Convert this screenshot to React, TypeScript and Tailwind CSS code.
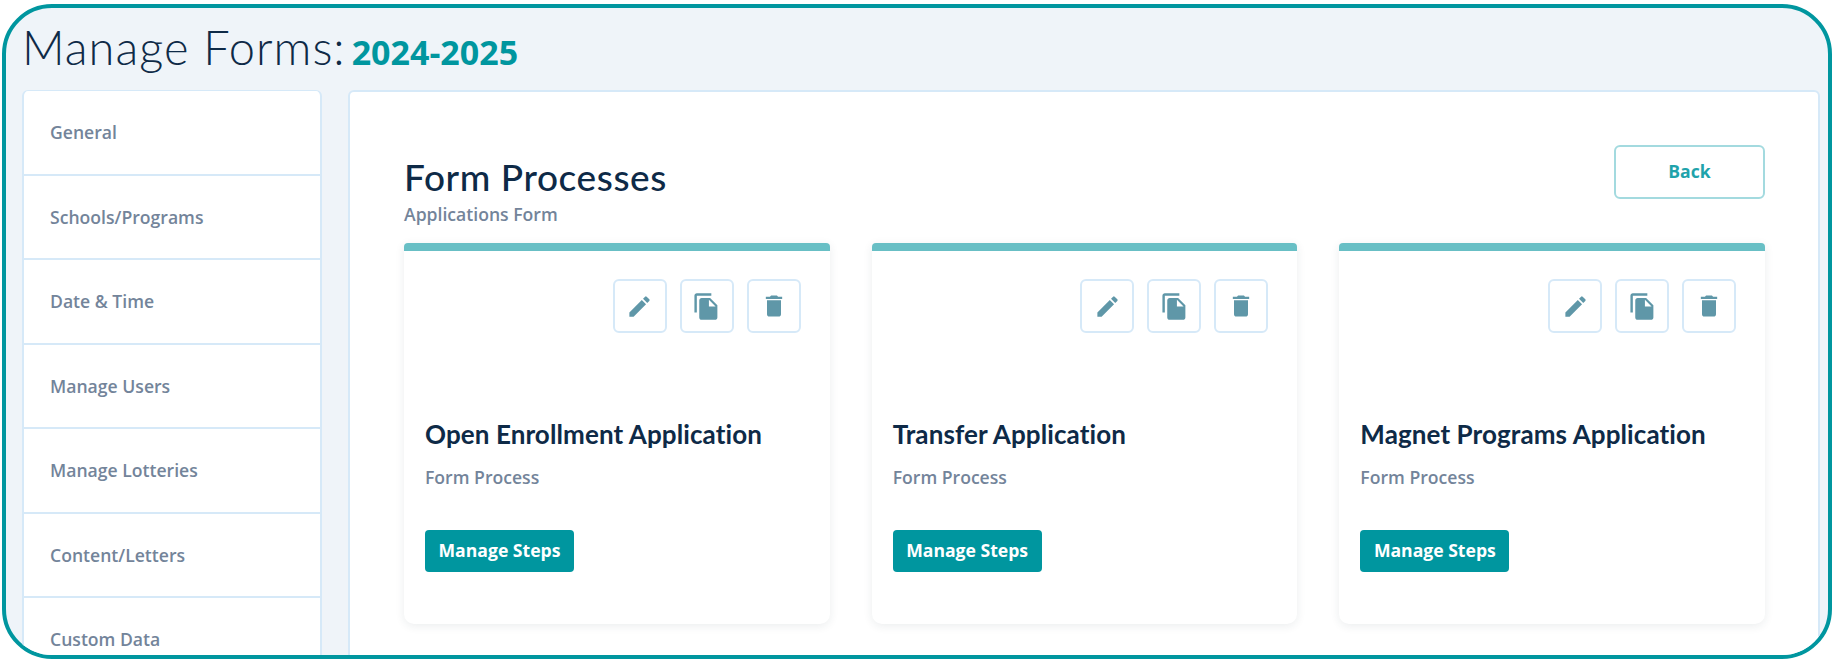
import React from "react";
import { MdEdit, MdFileCopy, MdDelete } from "react-icons/md";

const menu = ["General", "Schools/Programs", "Date & Time", "Manage Users", "Manage Lotteries", "Content/Letters", "Custom Data"];
const cards = ["Open Enrollment Application", "Transfer Application", "Magnet Programs Application"];
const open = "font-['Open_Sans',sans-serif]";
const lato = "font-['Lato',sans-serif]";

function IconBox({ children }: { children: React.ReactNode }) {
  return (
    <button className="flex h-[54px] w-[54px] items-center justify-center rounded-[6px] border-2 border-[#d6e9f8] bg-white text-[#5f97a8]">
      {children}
    </button>
  );
}

function Card({ title }: { title: string }) {
  return (
    <div className="flex h-[381px] flex-1 flex-col rounded-t-[4px] rounded-b-[10px] border-t-[8px] border-[#68bfc5] bg-white px-[21px] shadow-[0_2px_10px_rgba(30,50,70,0.09)]">
      <div className="mt-[28px] flex justify-end gap-[13px] pr-[8px]">
        <IconBox><MdEdit size={27} /></IconBox>
        <IconBox><MdFileCopy size={29} /></IconBox>
        <IconBox><MdDelete size={28} /></IconBox>
      </div>
      <h3 className={`mt-[85px] text-[26px] leading-[33px] font-bold tracking-[0.1px] text-[#0e2a47] ${lato}`}>{title}</h3>
      <p className={`mt-[14px] text-[17.6px] leading-[24px] font-semibold text-[#73849a] ${open}`}>Form Process</p>
      <button className={`mt-[41px] h-[42px] w-[149px] rounded-[4px] bg-[#00969f] pb-[2px] text-[17.6px] font-bold text-white ${open}`}>Manage Steps</button>
    </div>
  );
}

export default function App() {
  return (
    <div className="h-[666px] w-[1836px] overflow-hidden bg-white pt-[4px] pl-[2px]">
      <div className="h-[655px] w-[1830px] overflow-hidden rounded-[50px] border-[4px] border-[#00969f] bg-[#eff4f9]">
        <div className="flex h-[82px] items-baseline pt-[12px] pl-[16px]">
          <h1 className={`text-[47px] leading-[54px] font-light tracking-[1px] text-[#0e2a47] ${lato}`}>Manage Forms:</h1>
          <span className={`ml-[6px] text-[34px] font-bold text-[#00969f] ${open}`}>2024-2025</span>
        </div>
        <div className="flex items-start gap-[26px] pl-[16px]">
          <nav className="h-[600px] w-[300px] shrink-0 rounded-t-[6px] border-2 border-t border-[#d6e9f8] bg-white">
            {menu.map((m) => (
              <div key={m} className={`flex h-[84.5px] items-center border-b-2 border-[#d6e9f8] pl-[26px] text-[17.6px] font-semibold text-[#73849a] ${open}`}>
                {m}
              </div>
            ))}
          </nav>
          <main className="h-[600px] w-[1472px] shrink-0 rounded-t-[6px] border-2 border-[#d6e9f8] bg-white pt-[53px] pr-[53px] pl-[54px]">
            <div className="flex h-[98px] items-start justify-between">
              <div>
                <h2 className={`mt-[10px] text-[37px] leading-[44px] font-medium tracking-[0.6px] text-[#0e2a47] ${lato}`}>Form Processes</h2>
                <p className={`mt-[3px] text-[17.6px] leading-[24px] font-semibold text-[#73849a] ${open}`}>Applications Form</p>
              </div>
              <button className={`h-[54px] w-[151px] rounded-[6px] border-2 border-[#a3dadf] bg-white pb-[2px] text-[17.6px] font-bold text-[#1fa3ab] ${open}`}>Back</button>
            </div>
            <div className="flex gap-[42px]">
              {cards.map((c) => <Card key={c} title={c} />)}
            </div>
          </main>
        </div>
      </div>
    </div>
  );
}
